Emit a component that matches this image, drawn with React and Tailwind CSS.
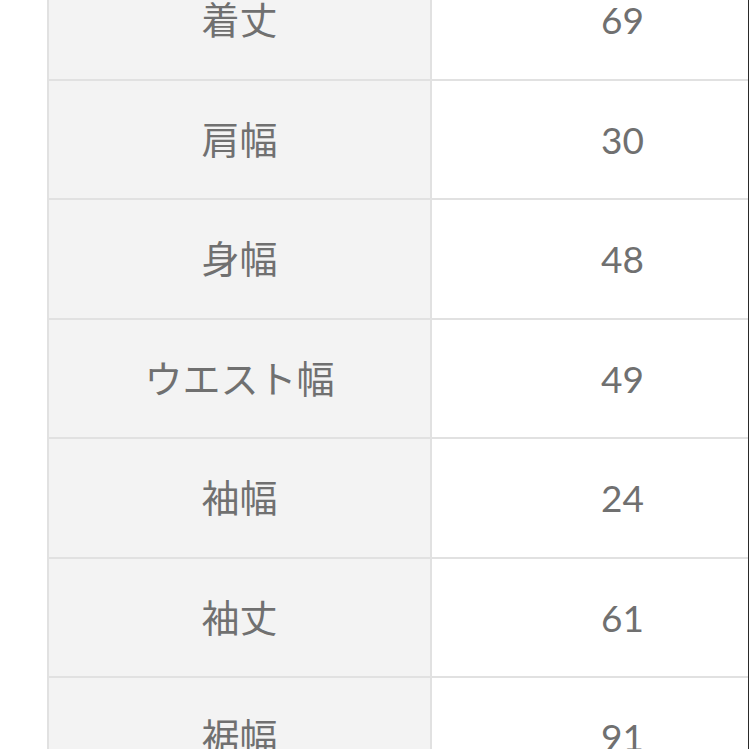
const rows = [
  ["着丈", "69"],
  ["肩幅", "30"],
  ["身幅", "48"],
  ["ウエスト幅", "49"],
  ["袖幅", "24"],
  ["袖丈", "61"],
  ["裾幅", "91"],
];

export default function App() {
  return (
    <div className="relative h-[749px] w-[749px] overflow-hidden bg-white font-['Lato','Noto_Sans_CJK_JP',sans-serif]">
      <div className="ml-[47px] mt-[-39px] w-[770px] border-l-2 border-[#e1e1e1]">
        {rows.map(([label, value]) => (
          <div
            key={label}
            className="grid h-[119.5px] grid-cols-[383px_381px] border-b-2 border-[#e1e1e1]"
          >
            <div className="flex items-center justify-center border-r-2 border-[#e1e1e1] bg-[#f3f3f3] text-[38px] text-[#707070]">
              {label}
            </div>
            <div className="flex items-center justify-center bg-white text-[37px] text-[#707070]">
              {value}
            </div>
          </div>
        ))}
      </div>
      <div className="absolute right-0 top-0 h-full w-px bg-[#2a2a2a]" />
    </div>
  );
}
